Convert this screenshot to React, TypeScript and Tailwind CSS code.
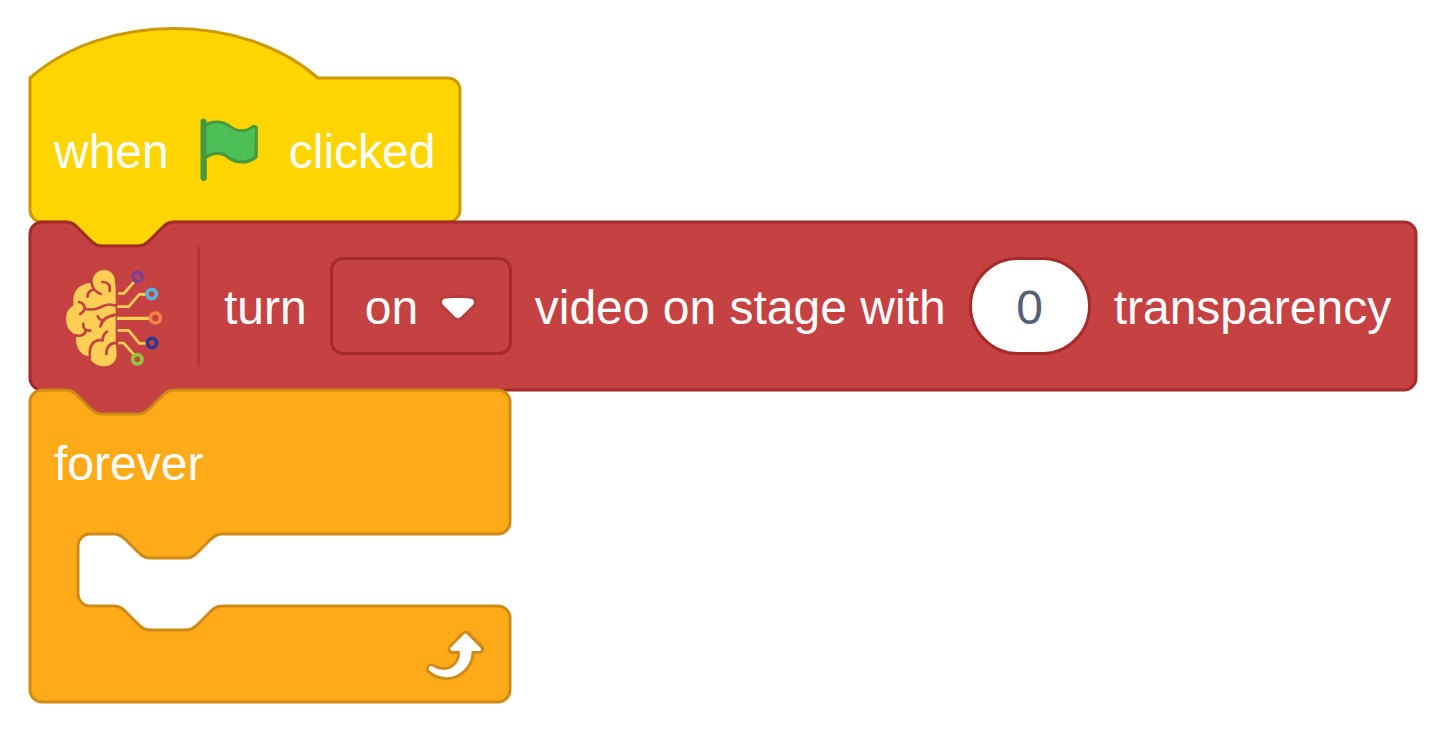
import { useLayoutEffect, useRef, useState, type ReactNode } from "react";

// Outlines are written in block units, one unit is 3px
const UNIT = 3;

const NOTCH = "c 2,0 3,1 4,2 l 4,4 c 1,1 2,2 4,2 h 12 c 2,0 3,-1 4,-2 l 4,-4 c 1,-1 2,-2 4,-2";
const NOTCH_BACK = "c -2,0 -3,1 -4,2 l -4,4 c -1,1 -2,2 -4,2 h -12 c -2,0 -3,-1 -4,-2 l -4,-4 c -1,-1 -2,-2 -4,-2";
const FLAT_TOP = `M 0,4 a 4,4 0 0,1 4,-4 h 8 ${NOTCH}`;
const BOTTOM = `a 4,4 0 0,1 -4,4 H 48 ${NOTCH_BACK} H 4 a 4,4 0 0,1 -4,-4 z`;

const hatShape = (w: number) => `M 0,0 c 25,-22 71,-22 96,0 H ${w - 4} a 4,4 0 0,1 4,4 v 40 ${BOTTOM}`;

const stackShape = (w: number) => `${FLAT_TOP} H ${w - 4} a 4,4 0 0,1 4,4 v 48 ${BOTTOM}`;

const loopShape = (w: number) =>
  `${FLAT_TOP} H ${w - 4} a 4,4 0 0,1 4,4 v 40 a 4,4 0 0,1 -4,4 H 64 ${NOTCH_BACK} h -8 a 4,4 0 0,0 -4,4 v 16 ` +
  `a 4,4 0 0,0 4,4 h 8 ${NOTCH} H ${w - 4} a 4,4 0 0,1 4,4 v 24 a 4,4 0 0,1 -4,4 H 4 a 4,4 0 0,1 -4,-4 z`;

interface BlockProps {
  shape: (w: number) => string;
  colors: string;
  className?: string;
  children: ReactNode;
}

function Block({ shape, colors, className = "", children }: BlockProps) {
  const ref = useRef<HTMLDivElement>(null);
  const [width, setWidth] = useState(480);

  useLayoutEffect(() => {
    if (ref.current) setWidth(Math.ceil(ref.current.getBoundingClientRect().width));
  }, []);

  return (
    <div ref={ref} className={`relative w-fit ${className}`}>
      <svg className="absolute inset-0 h-full w-full overflow-visible" aria-hidden="true">
        <path d={shape(width / UNIT)} transform={`scale(${UNIT})`} className={colors} strokeWidth="1" />
      </svg>
      {children}
    </div>
  );
}

function Label({ children }: { children: ReactNode }) {
  return <span className="pt-1 whitespace-nowrap">{children}</span>;
}

function GreenFlag() {
  return (
    <svg viewBox="0 0 24 24" className="size-18 shrink-0" role="img" aria-label="green flag">
      <path
        fill="#45993d"
        d="M20.8 3.7c-.4-.2-.9-.1-1.2.2-2 1.6-4.8 1.6-6.8 0-2.3-1.9-5.6-2.3-8.3-1v-.4c0-.6-.5-1-1-1s-1 .4-1 1v18.8c0 .5.5 1 1 1h.1c.5 0 1-.4 1-1v-6.4c1-.7 2.1-1.2 3.4-1.3 1.2 0 2.4.4 3.4 1.2 2.9 2.3 7 2.3 9.8 0 .3-.2.4-.5.4-.9V4.7c0-.5-.3-.9-.8-1z"
      />
      <path
        fill="#4cbf56"
        d="M20.5 13.9C18 16 14.4 16 11.9 14c-1.1-.9-2.5-1.4-4-1.4-1.2.1-2.3.5-3.4 1.1V4c2.5-1.4 5.5-1.1 7.7.6 2.4 1.9 5.7 1.9 8.1 0h.2l.1.1-.1 9.2z"
      />
    </svg>
  );
}

function LoopArrow() {
  return (
    <svg viewBox="0 0 24 24" className="size-18 shrink-0" aria-hidden="true">
      <path
        fill="#cf8b17"
        d="M23.3 11c-.3.6-.9 1-1.5 1h-1.6c-.1 1.3-.5 2.5-1.1 3.6-.9 1.7-2.3 3.2-4.1 4.1-1.7.9-3.6 1.2-5.5.9-1.8-.3-3.5-1.1-4.9-2.3-.7-.7-.7-1.9 0-2.6.6-.6 1.6-.7 2.3-.2H7c.9.6 1.9.9 2.9.9s1.9-.3 2.7-.9c1.1-.8 1.8-2.1 1.8-3.5h-1.5c-.9 0-1.7-.7-1.7-1.7 0-.4.2-.9.5-1.2l4.4-4.4c.7-.6 1.7-.6 2.4 0L23 9.2c.5.5.6 1.2.3 1.8z"
      />
      <path
        fill="#fff"
        d="M21.8 11h-2.6c0 1.5-.3 2.9-1 4.2-.8 1.6-2.1 2.8-3.7 3.6-1.5.8-3.3 1.1-4.9.8-1.6-.2-3.2-1-4.4-2.1-.4-.3-.4-.9-.1-1.2.3-.4.9-.4 1.2-.1 1 .7 2.2 1.1 3.4 1.1s2.3-.3 3.3-1c.9-.6 1.6-1.5 2-2.6.3-.9.4-1.8.2-2.8h-2.4c-.4 0-.7-.3-.7-.7 0-.2.1-.3.2-.4l4.4-4.4c.3-.3.7-.3.9 0L22 9.8c.3.3.4.6.3.9s-.3.3-.5.3z"
      />
    </svg>
  );
}

function DropdownArrow() {
  return (
    <svg
      viewBox="0 0 12.71 8.79"
      className="pointer-events-none absolute top-[37px] right-[34px] h-[26px] w-[38px]"
      aria-hidden="true"
    >
      <path
        fill="#231f20"
        opacity="0.1"
        d="M12.71,2.44A2.41,2.41,0,0,1,12,4.16L8.08,8.08a2.45,2.45,0,0,1-3.45,0L.72,4.16A2.42,2.42,0,0,1,0,2.44,2.48,2.48,0,0,1,.71.71C1,.47,1.43,0,6.36,0S11.75.46,12,.71A2.44,2.44,0,0,1,12.71,2.44Z"
      />
      <path
        fill="#fff"
        d="M6.36,7.79a1.43,1.43,0,0,1-1-.42L1.42,3.45a1.44,1.44,0,0,1,0-2c.56-.56,9.31-.56,9.87,0a1.44,1.44,0,0,1,0,2L7.37,7.37A1.43,1.43,0,0,1,6.36,7.79Z"
      />
    </svg>
  );
}

function BrainIcon() {
  return (
    <svg viewBox="12 -27 360 360" className="size-30 shrink-0 overflow-visible" fill="none" aria-hidden="true">
      <path
        fill="#ffce54"
        d="M195 80C195 58 181 45 162 45C144 45 130 58 128 77C127 82 125 84 120 84C91 86 69 107 70 137L70 152C56 159 48 174 48 192C48 216 60 232 78 239C76 275 88 299 117 304C124 323 141 334 162 334C185 334 200 318 200 297L197 262L197 100Z"
      />
      {/* folds */}
      <g stroke="#c64141" strokeWidth="8" strokeLinecap="round">
        <path d="M124 80Q128 109 152 117" />
        <path d="M131 104Q112 108 113 125" />
        <path d="M157 81C173 80 182 90 179 108" />
        <path d="M87 141Q105 146 104 162Q100 172 91 177" />
        <path d="M104 162C133 166 145 161 160 153C174 146 186 147 202 154" />
        <path d="M202 179C180 181 157 190 151 214" />
        <path d="M143 183Q146 195 160 196" />
        <path d="M100 206C98 219 104 228 121 227" />
        <path d="M76 241C94 245 105 240 108 226" />
        <path d="M120 308C115 273 130 252 158 256" />
        <path d="M158 255Q158 238 171 230" />
        <path d="M204 263C180 263 169 275 169 297" />
      </g>
      {/* wires */}
      <g stroke="#ffce54" strokeWidth="8">
        <path d="M205 115H222L252 81" />
        <path d="M202 155H236L268 118H290" />
        <path d="M201 190H302" strokeWidth="10" />
        <path d="M203 226H236L268 265H290" />
        <path d="M205 264H221L252 299" />
      </g>
      <g strokeWidth="11">
        <circle cx="263" cy="66" r="14" stroke="#7e3f98" />
        <circle cx="305" cy="117" r="14" stroke="#56b4e0" />
        <circle cx="316" cy="189" r="15" stroke="#f58345" />
        <circle cx="306" cy="264" r="14" stroke="#2b3990" />
        <circle cx="262" cy="313" r="14" stroke="#8dc63f" />
      </g>
    </svg>
  );
}

export default function App() {
  const [video, setVideo] = useState("on");
  const [transparency, setTransparency] = useState("0");

  return (
    <main className="min-h-screen bg-white px-[30px] pt-[78px] pb-8 font-['Liberation_Sans',Arial,sans-serif] text-5xl text-white">
      <Block shape={hatShape} colors="fill-[#ffd500] stroke-[#cc9900]">
        <div className="relative flex h-36 items-center gap-6 px-6">
          <Label>when</Label>
          <GreenFlag />
          <Label>clicked</Label>
        </div>
      </Block>

      <Block shape={stackShape} colors="fill-[#c64141] stroke-[#a52a2a]">
        <div className="relative flex h-42 items-center gap-6 px-6">
          <div className="flex shrink-0 gap-[23px]">
            <BrainIcon />
            <div className="w-[3px] rounded-full bg-[#b53535]" />
          </div>
          <Label>turn</Label>
          <div className="relative shrink-0">
            <select
              aria-label="video state"
              value={video}
              onChange={(e) => setVideo(e.target.value)}
              className="block h-24 w-45 appearance-none rounded-xl bg-transparent pt-1 pr-18 pl-[34px] outline-3 -outline-offset-2 outline-[#a52a2a]"
            >
              <option value="on">on</option>
              <option value="off">off</option>
            </select>
            <DropdownArrow />
          </div>
          <Label>video on stage with</Label>
          <input
            type="text"
            aria-label="transparency"
            value={transparency}
            onChange={(e) => setTransparency(e.target.value)}
            className="h-24 w-30 shrink-0 rounded-full bg-white pt-0.5 text-center text-[#575e75] outline-3 -outline-offset-2 outline-[#a52a2a]"
          />
          <Label>transparency</Label>
        </div>
      </Block>

      <Block shape={loopShape} colors="fill-[#ffab19] stroke-[#cf8b17]" className="min-w-[480px]">
        <div className="relative flex h-36 items-center px-6">
          <Label>forever</Label>
        </div>
        <div className="h-18" />
        <div className="relative flex h-24 items-center justify-end px-6">
          <LoopArrow />
        </div>
      </Block>
    </main>
  );
}
